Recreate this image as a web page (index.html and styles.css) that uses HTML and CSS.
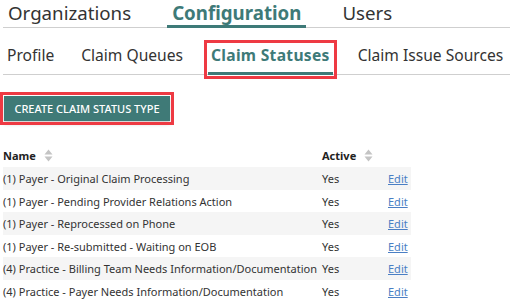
FILE: index.html
```html
<!DOCTYPE html>
<html>
<head>
<meta charset="utf-8">
<link rel="stylesheet" href="styles.css">
</head>
<body>
<div class="page">
  <nav class="tabs">
    <a class="tab">Organizations</a>
    <a class="tab active">Configuration</a>
    <a class="tab">Users</a>
  </nav>
  <nav class="subtabs">
    <a class="subtab">Profile</a>
    <a class="subtab">Claim Queues</a>
    <a class="subtab active highlight">Claim Statuses</a>
    <a class="subtab">Claim Issue Sources</a>
  </nav>
  <div class="actions">
    <button class="btn highlight">CREATE CLAIM STATUS TYPE</button>
  </div>
  <table class="grid">
    <thead>
      <tr>
        <th class="c-name">Name <span class="sort"><svg width="9" height="13" viewBox="0 0 9 13"><path d="M4.5 0.5 L8.5 5.5 L0.5 5.5 Z M0.5 7.5 L8.5 7.5 L4.5 12.5 Z" fill="#c4c4c4"/></svg></span></th>
        <th class="c-active">Active <span class="sort"><svg width="9" height="13" viewBox="0 0 9 13"><path d="M4.5 0.5 L8.5 5.5 L0.5 5.5 Z M0.5 7.5 L8.5 7.5 L4.5 12.5 Z" fill="#c4c4c4"/></svg></span></th>
        <th class="c-edit"></th>
      </tr>
    </thead>
    <tbody>
      <tr><td>(1) Payer - Original Claim Processing</td><td>Yes</td><td><a class="edit">Edit</a></td></tr>
      <tr><td>(1) Payer - Pending Provider Relations Action</td><td>Yes</td><td><a class="edit">Edit</a></td></tr>
      <tr><td>(1) Payer - Reprocessed on Phone</td><td>Yes</td><td><a class="edit">Edit</a></td></tr>
      <tr><td>(1) Payer - Re-submitted - Waiting on EOB</td><td>Yes</td><td><a class="edit">Edit</a></td></tr>
      <tr><td>(4) Practice - Billing Team Needs Information/Documentation</td><td>Yes</td><td><a class="edit">Edit</a></td></tr>
      <tr><td>(4) Practice - Payer Needs Information/Documentation</td><td>Yes</td><td><a class="edit">Edit</a></td></tr>
    </tbody>
  </table>
</div>
</body>
</html>
```

FILE: styles.css
```css
* { box-sizing: border-box; }
html, body { margin: 0; padding: 0; background: #fff; }
body {
  font-family: "Noto Sans", "Open Sans", sans-serif;
  color: #333;
  overflow: hidden;
  width: 510px;
  height: 302px;
}
.page { padding-left: 3px; }

.tabs {
  display: flex;
  gap: 31px;
  height: 28px;
  border-bottom: 1px solid #cfcfcf;
}
.tab {
  display: block;
  flex-shrink: 0;
  white-space: nowrap;
  padding: 0 5px;
  font-size: 18.7px;
  line-height: 25px;
  color: #333;
  border-bottom: 3px solid transparent;
  margin-bottom: -1px;
  height: 28px;
}
.tab.active {
  font-weight: bold;
  color: #3e7a78;
  border-bottom-color: #3e7a78;
}

.subtabs {
  display: flex;
  gap: 21px;
  padding-top: 16px;
  border-bottom: 1px solid #cfcfcf;
  height: 47px;
}
.subtab {
  display: block;
  flex-shrink: 0;
  white-space: nowrap;
  padding: 0 4px 6px;
  font-size: 15.6px;
  line-height: 22px;
  color: #333;
  border-bottom: 3px solid transparent;
  margin-bottom: -1px;
  height: 31px;
}
.subtab:first-child { margin-right: -2px; }
.subtab.active {
  font-weight: bold;
  color: #3e7a78;
  border-bottom-color: #3e7a78;
  padding: 0 3px 6px;
  letter-spacing: 0.3px;
}
.highlight {
  outline: 3px solid #ee3a43;
  outline-offset: 1px;
}

.actions {
  padding-top: 21px;
  padding-left: 1px;
}
.btn {
  display: block;
  width: 166px;
  height: 25px;
  border: 0;
  background: #3f7a77;
  color: #fff;
  font-family: "Noto Sans", "Open Sans", sans-serif;
  font-size: 11px;
  font-weight: 500;
  padding: 0;
  box-shadow: 0 3px 4px rgba(0,0,0,0.18);
}

.grid {
  margin-top: 23px;
  border-collapse: collapse;
  font-size: 11px;
  color: #333;
}
.grid th {
  text-align: left;
  font-weight: bold;
  color: #222;
  height: 23px;
  padding: 0;
  vertical-align: middle;
  white-space: nowrap;
}
.sort { display: inline-block; vertical-align: middle; margin-left: 5px; position: relative; top: -1px; }
.sort svg { display: block; }
.c-name { width: 319px; }
.c-active { width: 66px; }
.c-edit { width: 23px; }
.grid td {
  height: 22px;
  padding: 0;
  white-space: nowrap;
  vertical-align: middle;
}
.grid tbody tr:nth-child(odd) td { background: #f5f5f5; height: 23px; }
.edit {
  color: #4a7fc4;
  text-decoration: underline;
}
```
